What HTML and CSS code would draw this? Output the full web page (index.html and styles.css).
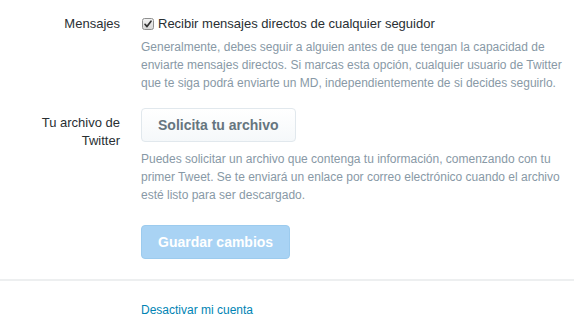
FILE: index.html
```html
<!DOCTYPE html>
<html lang="es">
<head>
<meta charset="utf-8">
<title>Configuración</title>
<link rel="stylesheet" href="styles.css">
</head>
<body>
<div class="settings">
  <div class="row row-messages">
    <div class="label">Mensajes</div>
    <div class="control">
      <label class="check">
        <span class="box"><svg width="12" height="12" viewBox="0 0 12 12"><defs><linearGradient id="g" x1="0" y1="0" x2="0" y2="1"><stop offset="0" stop-color="#f4f4f4"/><stop offset="1" stop-color="#d6d6d6"/></linearGradient></defs><rect x="0.5" y="0.5" width="11" height="11" rx="2" fill="url(#g)" stroke="#8e8f8f"/><path d="M3 6.3 L5 8.6 L9 3.2" fill="none" stroke="#333" stroke-width="1.7" stroke-linecap="round" stroke-linejoin="round"/></svg></span>
        <span>Recibir mensajes directos de cualquier seguidor</span>
      </label>
      <p class="help help-after-check">Generalmente, debes seguir a alguien antes de que tengan la capacidad de enviarte mensajes directos. Si marcas esta opción, cualquier usuario de Twitter que te siga podrá enviarte un MD, independientemente de si decides seguirlo.</p>
    </div>
  </div>
  <div class="row row-archive">
    <div class="label label-archive">Tu archivo de Twitter</div>
    <div class="control">
      <button class="btn" type="button">Solicita tu archivo</button>
      <p class="help help-after-btn">Puedes solicitar un archivo que contenga tu información, comenzando con tu primer Tweet. Se te enviará un enlace por correo electrónico cuando el archivo esté listo para ser descargado.</p>
    </div>
  </div>
  <div class="row row-save">
    <div class="label"></div>
    <div class="control">
      <button class="btn btn-primary" type="button" disabled>Guardar cambios</button>
    </div>
  </div>
  <hr class="divider">
  <div class="row row-link">
    <div class="label"></div>
    <div class="control">
      <a class="link" href="#">Desactivar mi cuenta</a>
    </div>
  </div>
</div>
</body>
</html>
```

FILE: styles.css
```css
html, body {
  margin: 0;
  padding: 0;
  background: #ffffff;
}

body {
  font-family: "Liberation Sans", Arial, sans-serif;
  font-size: 13px;
  line-height: 18px;
  color: #292f33;
}

.settings {
  padding-top: 15px;
}

.row {
  display: flex;
  gap: 21px;
}

.label {
  width: 100px;
  margin-left: 20px;
  flex: none;
  text-align: right;
}

.label-archive {
  padding-top: 6px;
}

.control {
  width: 425px;
}

.check {
  display: flex;
  align-items: center;
  gap: 4px;
  height: 18px;
}

.box {
  display: flex;
  margin-left: 1px;
}

.help {
  margin: 0;
  font-size: 12px;
  line-height: 18px;
  color: #8899a6;
}

.help-after-check {
  margin-top: 5px;
}

.help-after-btn {
  margin-top: 8px;
}

.row-archive {
  margin-top: 16px;
}

.row-save {
  margin-top: 21px;
}

.btn {
  display: block;
  height: 34px;
  padding: 0 16px;
  font-family: "Liberation Sans", Arial, sans-serif;
  font-size: 14px;
  font-weight: bold;
  line-height: 18px;
  color: #66757f;
  background: linear-gradient(#ffffff, #f5f8fa);
  border: 1px solid #e1e8ed;
  border-radius: 4px;
}

.btn-primary {
  color: #ffffff;
  background: #a9d3f4;
  border-color: #9ccbee;
}

.divider {
  margin: 20px 0 0;
  border: 0;
  border-top: 2px solid #edeff0;
}

.row-link {
  margin-top: 20px;
}

.link {
  font-size: 12px;
  color: #0084b4;
  text-decoration: none;
}
```
